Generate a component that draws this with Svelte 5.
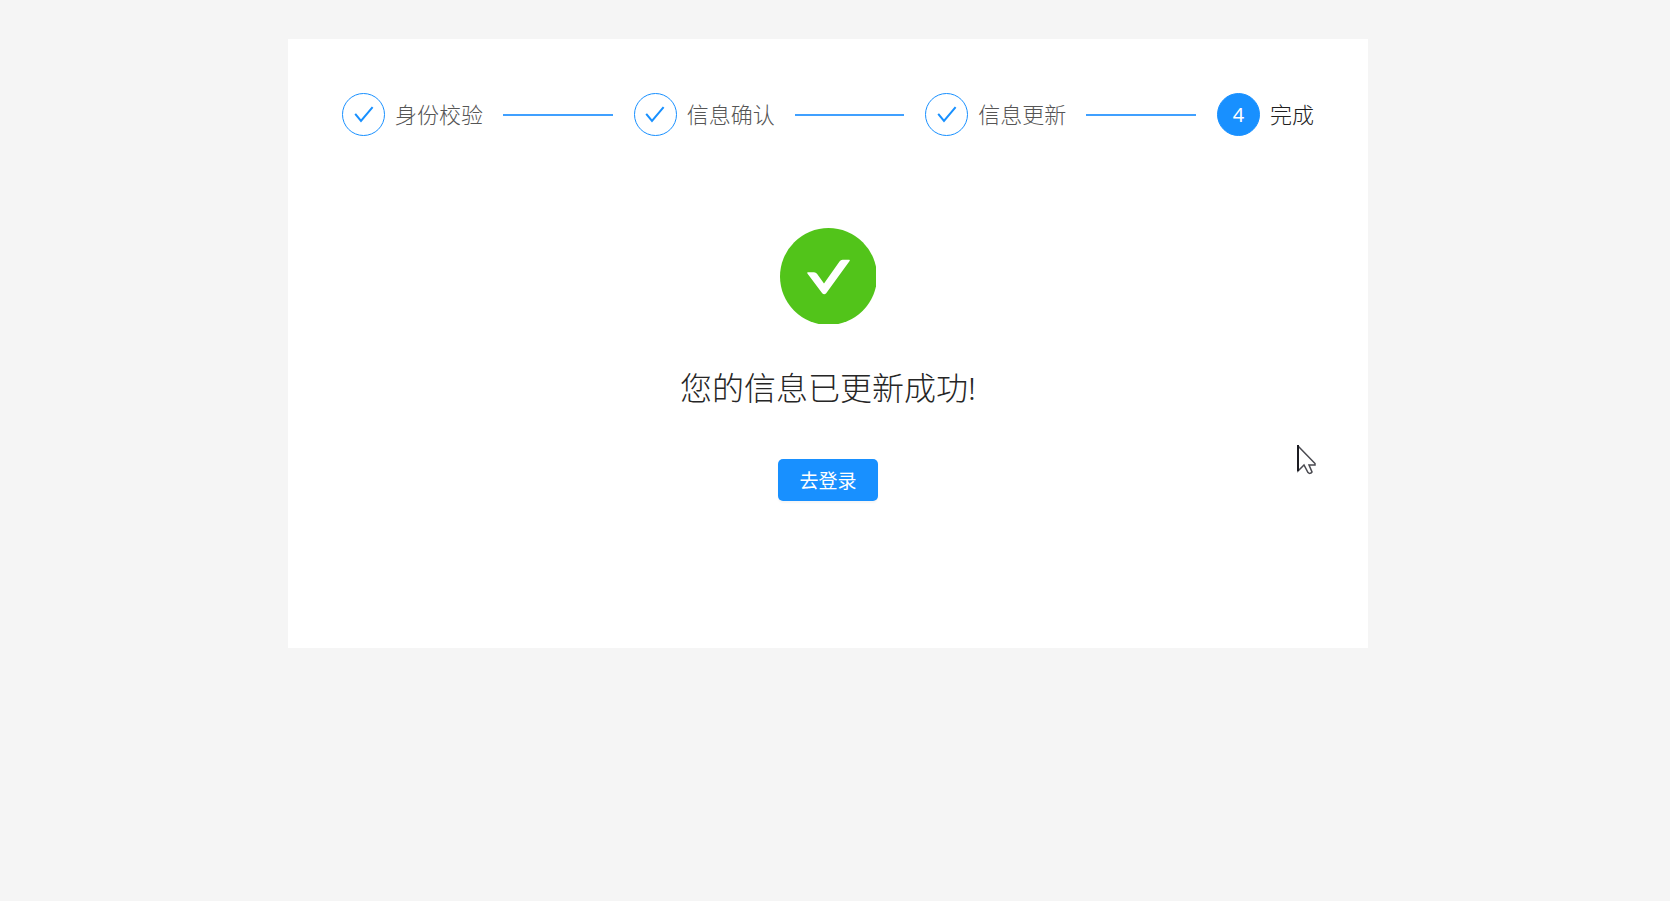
<script>
	const steps = [
		{ title: '身份校验', done: true },
		{ title: '信息确认', done: true },
		{ title: '信息更新', done: true },
		{ title: '完成', done: false }
	];
</script>

<div class="page">
	<main class="card">
		<ol class="steps">
			{#each steps as step, i}
				<li class="step" class:active={!step.done}>
					<span class="step-icon">
						{#if step.done}
							<svg viewBox="0 0 20 20" width="20" height="20" aria-hidden="true">
								<path d="M1.2 8.8 7 16 18.6 2.2" />
							</svg>
						{:else}
							{i + 1}
						{/if}
					</span>
					<span class="step-title">{step.title}</span>
					{#if i < steps.length - 1}
						<span class="step-line"></span>
					{/if}
				</li>
			{/each}
		</ol>

		<section class="result">
			<svg viewBox="0 0 96 96" width="96" height="96" aria-hidden="true">
				<circle cx="48.5" cy="48.5" r="48.5" fill="#52c41a" />
				<path
					d="M28 44.2h6q1.900 0 3 1.500l7 9.700 15.500-22q1.200-1.700 3-1.700h6.600q1.300 0 .5 1.200L46.200 65.200q-2 2.200-4 0L27.400 45.400q-.7-1.200.6-1.200z"
					fill="#fff"
				/>
			</svg>
			<h1>您的信息已更新成功!</h1>
			<button type="button">去登录</button>
		</section>

		<svg class="cursor" viewBox="0 0 19 30" width="19" height="30" aria-hidden="true">
			<path d="M1 1v25l6-6 4 7.500q2 2 4-.5l-3-7h6v-1.500z" fill="#fff" stroke="#4a4a50" stroke-width="1.500" />
			<path d="M1 0v26" stroke="#1c1c22" stroke-width="2" />
		</svg>
	</main>
</div>

<style>
	:global(body) {
		background: #f5f5f5;
	}

	.page {
		padding: 39px 14px 39px 0;
		font-family: 'Noto Sans', 'Noto Sans CJK SC', sans-serif;
		font-weight: 300;
		color: #262626;
	}

	.card {
		position: relative;
		box-sizing: border-box;
		max-width: 1080px;
		margin: 0 auto;
		padding: 54px 54px 147px;
		background: #fff;
	}

	.steps {
		display: flex;
		margin: 0;
		padding: 0;
		list-style: none;
	}

	.step {
		display: flex;
		flex: 1 1 auto;
		align-items: center;
		color: #555;
		font-size: 22px;
		line-height: 43px;
		white-space: nowrap;
	}

	.step:last-child {
		flex: none;
	}

	.step-icon {
		display: flex;
		flex: none;
		align-items: center;
		justify-content: center;
		box-sizing: border-box;
		width: 43px;
		height: 43px;
		margin-right: 10px;
		border: 1px solid #1890ff;
		border-radius: 50%;
		font-size: 20px;
	}

	.step-icon path {
		fill: none;
		stroke: #1890ff;
		stroke-width: 2;
	}

	.step-line {
		flex: 1;
		height: 2px;
		margin: 0 21px 0 20px;
		background: #40a0ff;
	}

	.active {
		color: #1f1f1f;
	}

	.active .step-icon {
		background: #1890ff;
		color: #fff;
		font-weight: 400;
	}

	.result {
		display: flex;
		flex-direction: column;
		align-items: center;
		padding-top: 92px;
	}

	h1 {
		margin: 40px 0 47px;
		font-size: 32px;
		font-weight: 300;
		line-height: 48px;
	}

	button {
		height: 42px;
		padding: 0 21px;
		border: 0;
		border-radius: 5px;
		background: #1890ff;
		box-shadow: 0 2px 2px rgba(0, 0, 0, 0.04);
		color: #fff;
		font-family: inherit;
		font-size: 19px;
		font-weight: 400;
	}

	.cursor {
		position: absolute;
		top: 406px;
		right: 52px;
	}
</style>
